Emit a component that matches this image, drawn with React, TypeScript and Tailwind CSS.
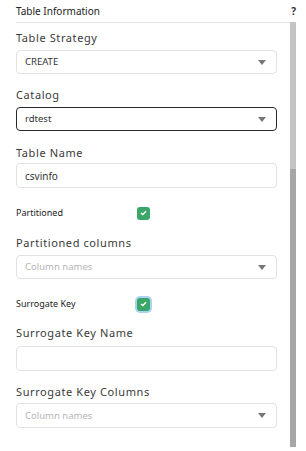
import React from "react";

const font = { fontFamily: '"Noto Sans", "Open Sans", sans-serif' };

function Arrow() {
  return (
    <svg width="8" height="5" viewBox="0 0 8 5" className="shrink-0">
      <path d="M0 0 L8 0 L4 5 Z" fill="#777" />
    </svg>
  );
}

function Label({ children }: { children: React.ReactNode }) {
  return (
    <div className="text-[11px] leading-[14px] h-[14px] tracking-[0.6px] text-[#3a3a3a]">{children}</div>
  );
}

function Select({ value, placeholder, dark, h = "h-[24px]" }: { value?: string; placeholder?: string; dark?: boolean; h?: string }) {
  return (
    <div
      className={`${h} rounded-[4px] border flex items-center justify-between pl-[8px] pr-[10px] ${
        dark ? "border-[#2a2a2a]" : "border-[#e2e2e2]"
      }`}
    >
      <span className={`text-[9.5px] leading-[12px] ${value ? "text-[#333]" : "text-[#b5b5b5]"}`}>{value ?? placeholder}</span>
      <Arrow />
    </div>
  );
}

function Input({ value }: { value?: string }) {
  return (
    <div className="h-[25px] rounded-[4px] border border-[#e2e2e2] flex items-center pl-[8px]">
      <span className="text-[10px] leading-[12px] text-[#333]">{value}</span>
    </div>
  );
}

function Check({ focus }: { focus?: boolean }) {
  return (
    <div
      className={`w-[13px] h-[13px] rounded-[3px] bg-[#3aa66a] flex items-center justify-center ${
        focus ? "ring-2 ring-[#a9d3f0]" : ""
      }`}
    >
      <svg width="7" height="6" viewBox="0 0 7 6">
        <path d="M1 3 L2.8 4.6 L6 1.2" stroke="#fff" strokeWidth="1.4" fill="none" />
      </svg>
    </div>
  );
}

export default function App() {
  return (
    <div className="w-[306px] h-[451px] bg-white overflow-hidden relative" style={font}>
      <div className="flex items-center justify-between h-[22px] pl-[16px] pr-[10px]">
        <span className="text-[10px] text-[#222]">Table Information</span>
        <span className="text-[10px] font-bold text-[#333]">?</span>
      </div>
      <div className="flex">
        <div className="flex-1 border-t border-[#e6e6e6] ml-[16px] pr-[13px] pt-[8px] flex flex-col">
          <Label>Table Strategy</Label>
          <div className="mt-[5px]"><Select value="CREATE" /></div>
          <div className="mt-[14px]"><Label>Catalog</Label></div>
          <div className="mt-[5px]"><Select value="rdtest" dark /></div>
          <div className="mt-[15px]"><Label>Table Name</Label></div>
          <div className="mt-[3px]"><Input value="csvinfo" /></div>
          <div className="mt-[18px] flex items-center h-[14px]">
            <span className="w-[121px] text-[9px] leading-[12px] text-[#222]">Partitioned</span>
            <Check />
          </div>
          <div className="mt-[16px]"><Label>Partitioned columns</Label></div>
          <div className="mt-[5px]"><Select placeholder="Column names" /></div>
          <div className="mt-[18px] flex items-center h-[14px]">
            <span className="w-[121px] text-[9px] leading-[12px] text-[#222]">Surrogate Key</span>
            <Check focus />
          </div>
          <div className="mt-[15px]"><Label>Surrogate Key Name</Label></div>
          <div className="mt-[6px]"><Input /></div>
          <div className="mt-[14px]"><Label>Surrogate Key Columns</Label></div>
          <div className="mt-[4px]"><Select placeholder="Column names" h="h-[25px]" /></div>
        </div>
        <div className="w-[6px] h-[425px] flex flex-col shrink-0">
          <div className="h-[147px] bg-[#c4c4c4]" />
          <div className="flex-1 bg-[#a6a6a6]" />
        </div>
        <div className="w-[10px] shrink-0" />
      </div>
    </div>
  );
}
